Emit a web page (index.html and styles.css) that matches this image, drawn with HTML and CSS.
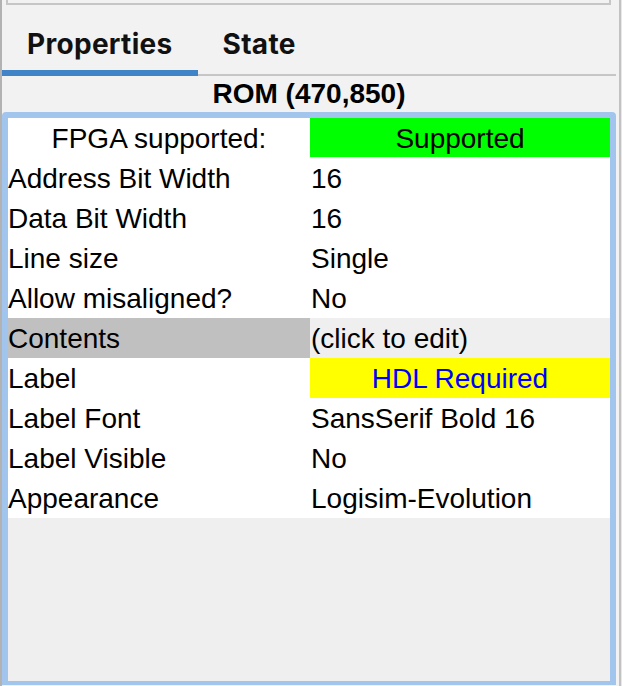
FILE: index.html
```html
<!DOCTYPE html>
<html>
<head>
<meta charset="utf-8">
<link rel="stylesheet" href="styles.css">
</head>
<body>
<div class="window">
  <div class="edge-left"></div>
  <div class="main">
    <div class="topbox"></div>
    <div class="tabs">
      <div class="tab selected">Properties</div>
      <div class="tab">State</div>
    </div>
    <div class="title">ROM (470,850)</div>
    <div class="panel">
      <div class="table">
        <div class="cell label center">FPGA supported:</div>
        <div class="cell value center green">Supported</div>

        <div class="cell label">Address Bit Width</div>
        <div class="cell value">16</div>

        <div class="cell label">Data Bit Width</div>
        <div class="cell value">16</div>

        <div class="cell label">Line size</div>
        <div class="cell value">Single</div>

        <div class="cell label">Allow misaligned?</div>
        <div class="cell value">No</div>

        <div class="cell label sel">Contents</div>
        <div class="cell value soft">(click to edit)</div>

        <div class="cell label">Label</div>
        <div class="cell value center yellow">HDL Required</div>

        <div class="cell label">Label Font</div>
        <div class="cell value">SansSerif Bold 16</div>

        <div class="cell label">Label Visible</div>
        <div class="cell value">No</div>

        <div class="cell label">Appearance</div>
        <div class="cell value">Logisim-Evolution</div>
      </div>
    </div>
  </div>
  <div class="edge-right"></div>
</div>
</body>
</html>
```

FILE: styles.css
```css
html, body {
  margin: 0;
  padding: 0;
  background: #f2f2f2;
}

.window {
  display: flex;
  width: 622px;
  height: 686px;
  overflow: hidden;
}

.edge-left {
  width: 2px;
  background: #b2b2b2;
  flex: none;
}

.edge-right {
  width: 2px;
  flex: none;
  background: #c2c2c2;
  border-right: 1px solid #e8e8e8;
}

.main {
  width: 617px;
  flex: none;
  display: flex;
  flex-direction: column;
}

.topbox {
  height: 3px;
  margin: 0 8px 0 4px;
  border: 2px solid #c6c6c6;
  border-top: none;
}

.tabs {
  display: flex;
  margin-right: 3px;
  border-bottom: 2px solid #c6c6c6;
  height: 69px;
}

.tab {
  font-family: Inter, "Liberation Sans", sans-serif;
  font-weight: 700;
  font-size: 28px;
  letter-spacing: 0.3px;
  line-height: 34px;
  color: #111;
  padding: 22px 25px 15px;
  height: 34px;
  margin-bottom: -2px;
}

.tab.selected {
  box-shadow: inset 0 -6px 0 #4083c6;
}

.title {
  font-family: "Liberation Sans", Arial, sans-serif;
  font-weight: 700;
  font-size: 28px;
  line-height: 36px;
  height: 36px;
  text-align: center;
  margin-right: 3px;
  color: #000;
}

.panel {
  flex: 1;
  margin-right: 3px;
  margin-bottom: 1px;
  border: 6px solid #a1c5ed;
  border-bottom-width: 4px;
  border-radius: 4px 4px 0 0;
  background: #efefef;
}

.table {
  display: grid;
  grid-template-columns: 302px 300px;
  grid-auto-rows: 40px;
}

.cell {
  font-family: "Liberation Sans", Arial, sans-serif;
  font-size: 28px;
  line-height: 39px;
  padding-top: 1px;
  color: #000;
  background: #fff;
  padding-left: 1px;
  white-space: nowrap;
}

.cell.label {
  padding-left: 0;
}

.cell.center {
  text-align: center;
  padding-left: 0;
}

.cell.green {
  background: #00ff00;
  height: 38px;
}

.cell.yellow {
  background: #ffff00;
  color: #0000ff;
}

.cell.sel {
  background: #c0c0c0;
}

.cell.soft {
  background: #efefef;
}
```
